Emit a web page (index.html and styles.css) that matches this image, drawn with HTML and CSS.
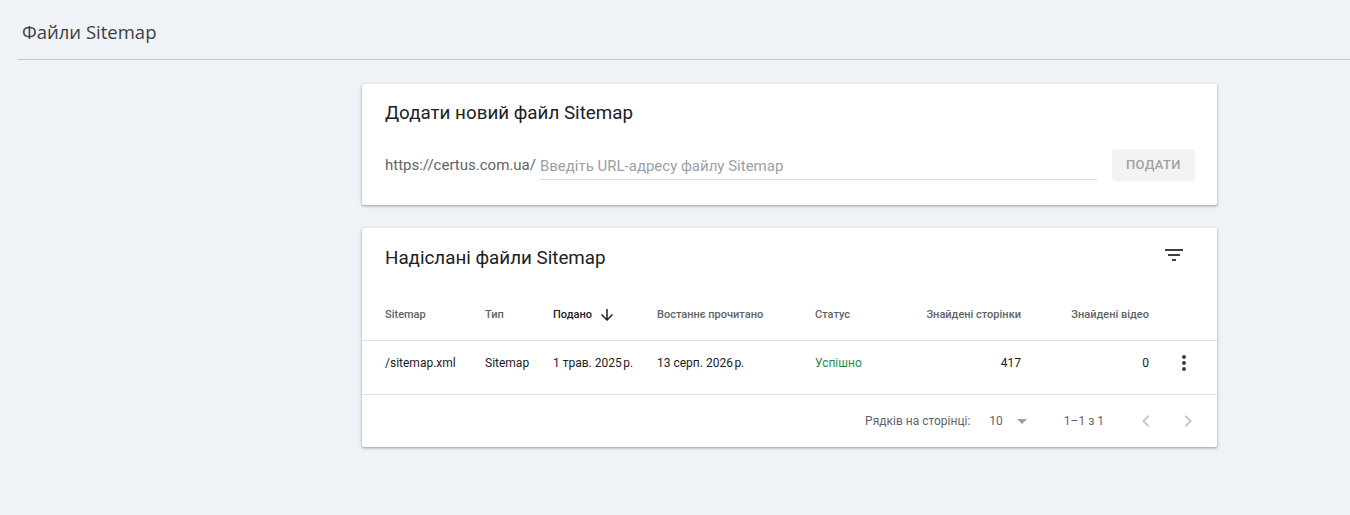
FILE: index.html
```html
<!DOCTYPE html>
<html lang="uk">

<head>
    <meta charset="UTF-8">
    <meta name="viewport" content="width=device-width, initial-scale=1.0">
    <title>Файли Sitemap</title>

    <link rel="stylesheet" href="styles.css">
</head>

<body>
    <header class="page-header">
        <h1>Файли Sitemap</h1>
    </header>

    <main class="content">
        <section class="card add-card">
            <h2>Додати новий файл Sitemap</h2>
            <div class="add-row">
                <span class="prefix">https://certus.com.ua/</span>
                <input type="text" class="url-input" placeholder="Введіть URL-адресу файлу Sitemap">
                <button class="submit" disabled>Подати</button>
            </div>
        </section>

        <section class="card list-card">
            <div class="list-head">
                <h2>Надіслані файли Sitemap</h2>
                <button class="icon-btn filter">
                    <svg viewBox="0 0 24 24" width="24" height="24" fill="currentColor">
                        <path d="M10 18h4v-2h-4v2zM3 6v2h18V6H3zm3 7h12v-2H6v2z"></path>
                    </svg>
                </button>
            </div>

            <div class="grid-row head-row">
                <div>Sitemap</div>
                <div>Тип</div>
                <div class="sorted">Подано
                    <svg viewBox="0 0 24 24" width="18" height="18" fill="currentColor">
                        <path d="M20 12l-1.41-1.41L13 16.17V4h-2v12.17l-5.58-5.59L4 12l8 8 8-8z"></path>
                    </svg>
                </div>
                <div>Востаннє прочитано</div>
                <div>Статус</div>
                <div class="num">Знайдені сторінки</div>
                <div class="num">Знайдені відео</div>
                <div></div>
            </div>

            <div class="grid-row data-row">
                <div>/sitemap.xml</div>
                <div>Sitemap</div>
                <div>1 трав. 2025&#8239;р.</div>
                <div>13 серп. 2026&#8239;р.</div>
                <div class="ok">Успішно</div>
                <div class="num">417</div>
                <div class="num">0</div>
                <div class="actions">
                    <svg viewBox="0 0 24 24" width="24" height="24" fill="currentColor">
                        <path d="M12 8c1.1 0 2-.9 2-2s-.9-2-2-2-2 .9-2 2 .9 2 2 2zm0 2c-1.1 0-2 .9-2 2s.9 2 2 2 2-.9 2-2-.9-2-2-2zm0 6c-1.1 0-2 .9-2 2s.9 2 2 2 2-.9 2-2-.9-2-2-2z"></path>
                    </svg>
                </div>
            </div>

            <div class="pager">
                <span class="pager-label">Рядків на сторінці:</span>
                <span class="page-size">10
                    <svg viewBox="0 0 24 24" width="24" height="24" fill="currentColor">
                        <path d="M7 10l5 5 5-5z"></path>
                    </svg>
                </span>
                <span class="range">1–1 з 1</span>
                <span class="nav">
                    <svg viewBox="0 0 24 24" width="24" height="24" fill="currentColor">
                        <path d="M15.41 7.41L14 6l-6 6 6 6 1.41-1.41L10.83 12z"></path>
                    </svg>
                </span>
                <span class="nav">
                    <svg viewBox="0 0 24 24" width="24" height="24" fill="currentColor">
                        <path d="M10 6L8.59 7.41 13.17 12l-4.58 4.59L10 18l6-6z"></path>
                    </svg>
                </span>
            </div>
        </section>
    </main>
</body>

</html>
```

FILE: styles.css
```css
body {
    margin: 0;
    height: 515px;
    overflow: hidden;
    background: #eff2f7;
    font-family: Roboto, 'Liberation Sans', arial, sans-serif;
    color: #202124;
}

.page-header {
    margin-left: 18px;
    height: 59px;
    border-bottom: 1px solid #c7c9cc;
    display: flex;
    align-items: center;
    padding-left: 4px;
}

.page-header h1 {
    margin: 0;
    font-family: 'Open Sans', Roboto, sans-serif;
    font-size: 18.5px;
    font-weight: 400;
    color: #3c4043;
    position: relative;
    top: 2px;
}

.content {
    padding: 24px 0 0 362px;
}

.card {
    width: 855px;
    background: #fff;
    border-radius: 2px;
    box-shadow: 0 1px 2px rgba(60, 64, 67, .3), 0 1px 3px 1px rgba(60, 64, 67, .15);
    margin-bottom: 23px;
}

.card h2 {
    margin: 0;
    font-size: 18.8px;
    font-weight: 400;
    line-height: 24px;
    color: #202124;
}

/* add sitemap */

.add-card {
    padding: 17px 22px 24px 23px;
    box-sizing: border-box;
    height: 121px;
}

.add-row {
    display: flex;
    align-items: center;
    margin-top: 24px;
    height: 32px;
}

.prefix {
    font-size: 15px;
    color: #5f6368;
    margin-right: 4px;
}

.url-input {
    width: 557px;
    border: none;
    border-bottom: 1px solid #dadce0;
    padding: 3px 0 4px;
    margin-top: 3px;
    font-family: inherit;
    font-size: 15px;
    color: #202124;
    outline: none;
}

.url-input::placeholder {
    color: #9aa0a6;
}

.submit {
    margin-left: 15px;
    width: 83px;
    height: 32px;
    padding: 0 0 2px;
    border: none;
    border-radius: 4px;
    background: #f3f3f3;
    color: #a1a1a1;
    font-family: inherit;
    font-size: 13px;
    font-weight: 500;
    text-transform: uppercase;
    letter-spacing: .3px;
}

/* submitted list */

.list-head {
    display: flex;
    justify-content: space-between;
    align-items: center;
    padding: 18px 23px 0 23px;
    height: 24px;
}

.icon-btn {
    border: none;
    background: none;
    padding: 0;
    color: #3c4043;
    display: flex;
    margin-right: 8px;
    margin-top: -6px;
}

.grid-row {
    display: grid;
    grid-template-columns: 100px 68px 104px 158px 85px 121px 128px 68px;
    padding-left: 23px;
    align-items: center;
    box-sizing: border-box;
    border-bottom: 1px solid #e0e0e0;
}

.head-row {
    margin-top: 18px;
    height: 53px;
    padding-top: 1px;
    font-size: 11px;
    font-weight: 500;
    color: #5f6368;
}

.head-row .sorted {
    color: #202124;
    display: flex;
    align-items: center;
    gap: 6px;
}

.data-row {
    height: 54px;
    padding-bottom: 9px;
    font-size: 12px;
    color: #202124;
}

.num {
    text-align: right;
}

.ok {
    color: #1e8e3e;
}

.actions {
    display: flex;
    justify-content: flex-start;
    padding-left: 23px;
    color: #3c4043;
}

.pager {
    display: flex;
    align-items: center;
    justify-content: flex-end;
    height: 52px;
    font-size: 12px;
    color: #5f6368;
    padding-right: 17px;
}

.page-size {
    display: flex;
    align-items: center;
    margin-left: 19px;
    color: #5f6368;
}

.page-size svg {
    color: #9aa0a6;
    margin-left: 7px;
}

.range {
    margin-left: 30px;
    margin-right: 12px;
}

.nav {
    display: flex;
    color: #c5c8cc;
    margin-left: 18px;
}
```
